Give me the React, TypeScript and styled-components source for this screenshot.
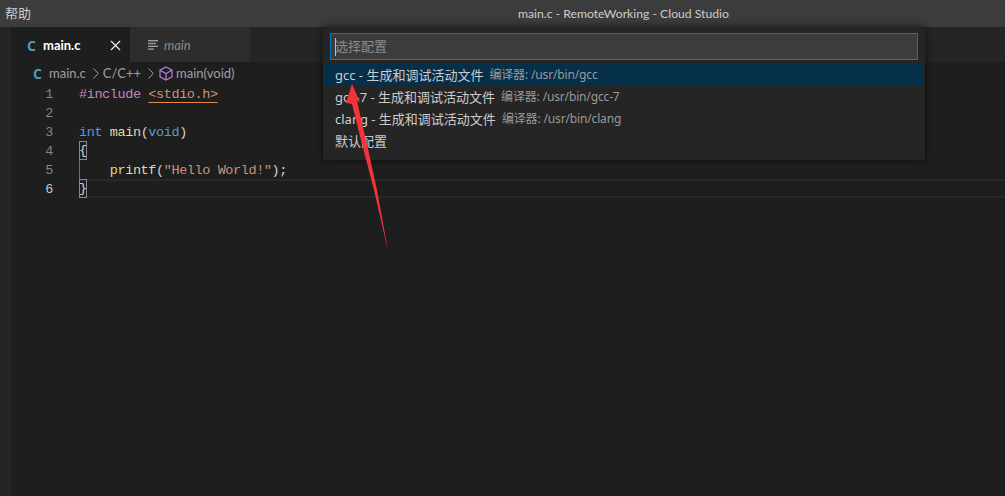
import React from 'react';
import styled, { createGlobalStyle } from 'styled-components';
import { X } from 'lucide-react';

const uiFont = `'Lato', 'Noto Sans CJK SC', sans-serif`;
const cjkFont = `'Noto Sans', 'Noto Sans CJK SC', sans-serif`;

const GlobalStyle = createGlobalStyle`
    html, body {
        margin: 0;
        height: 100%;
        background: #1e1e1e;
        overflow: hidden;
    }
    #root {
        height: 100%;
    }
`;

const Window = styled.div`
    position: relative;
    width: 1005px;
    height: 496px;
    display: flex;
    flex-direction: column;
    font-family: ${cjkFont};
    overflow: hidden;
`;

const TitleBar = styled.div`
    height: 27px;
    flex: none;
    display: flex;
    align-items: center;
    padding-left: 5px;
    background: #3c3c3c;
    color: #cccccc;
    font-size: 13px;
`;

const MenuItem = styled.span`
    width: 26px;
    padding-bottom: 3px;
`;

const WindowTitle = styled.span`
    margin-left: 487px;
    padding-bottom: 1px;
    font-family: ${uiFont};
    font-size: 12.2px;
    white-space: nowrap;
`;

const Body = styled.div`
    flex: 1;
    display: flex;
    min-height: 0;
`;

const Sidebar = styled.div`
    width: 11px;
    flex: none;
    background: #252526;
`;

const Main = styled.div`
    flex: 1;
    display: flex;
    flex-direction: column;
`;

const TabBar = styled.div`
    height: 35px;
    flex: none;
    display: flex;
    background: #252526;
`;

const Tab = styled.div<{ $active?: boolean }>`
    display: flex;
    align-items: center;
    box-sizing: border-box;
    padding-top: 1px;
    background: ${(p) => (p.$active ? '#1e1e1e' : '#2d2d2d')};
    color: ${(p) => (p.$active ? '#ffffff' : '#8a8a8a')};
    width: ${(p) => (p.$active ? '119px' : '120px')};
    padding-left: ${(p) => (p.$active ? '16px' : '18px')};
    font-size: 13px;
    font-style: ${(p) => (p.$active ? 'normal' : 'italic')};
    font-weight: ${(p) => (p.$active ? 700 : 400)};
    font-family: ${uiFont};
`;

const LangIcon = styled.span`
    width: 16px;
    flex: none;
    color: #519aba;
    font-family: 'Open Sans', sans-serif;
    font-weight: 700;
    font-style: normal;
    font-size: 14px;
`;

const TabName = styled.span`
    width: 38px;
`;

const CloseIcon = styled(X)`
    margin-left: 26px;
    color: #f0f0f0;
`;

const TabIconSvg = styled.svg`
    margin-right: 5px;
    flex: none;
`;

const Breadcrumbs = styled.div`
    height: 22px;
    flex: none;
    display: flex;
    align-items: center;
    padding-left: 22px;
    color: #a0a0a0;
    font-family: ${uiFont};
    font-size: 13px;
    white-space: nowrap;
`;

const Chevron = styled.svg`
    margin: 0 4px 0 7px;
    flex: none;
`;

const CubeSvg = styled.svg`
    margin: 0 3px 0 1px;
    flex: none;
`;

const Editor = styled.div`
    flex: 1;
    font-family: 'Liberation Mono', monospace;
    font-size: 13.5px;
    letter-spacing: -0.4px;
`;

const Row = styled.div`
    height: 19px;
    display: flex;
    line-height: 22px;
`;

const LineNumber = styled.div<{ $current?: boolean }>`
    width: 42px;
    margin-right: 26px;
    flex: none;
    text-align: right;
    color: ${(p) => (p.$current ? '#c6c6c6' : '#858585')};
`;

const Code = styled.div<{ $current?: boolean }>`
    position: relative;
    flex: 1;
    box-sizing: border-box;
    white-space: pre;
    color: #d4d4d4;
    ${(p) => (p.$current ? 'border-top: 2px solid #282828; border-bottom: 2px solid #282828;' : '')}
`;

const Tok = styled.span<{ $c: string }>`
    color: ${(p) => p.$c};
`;

const IncludePath = styled.span`
    color: #ce9178;
    text-decoration: underline 1px #e2884f;
    text-decoration-skip-ink: none;
    text-underline-offset: 4px;
`;

const BraceMatch = styled.span<{ $current?: boolean }>`
    position: absolute;
    left: 0;
    top: ${(p) => (p.$current ? '-2px' : '0')};
    width: 7.7px;
    height: 19px;
    line-height: 20px;
    box-sizing: border-box;
    outline: 1px solid #888888;
    outline-offset: -1px;
`;

const IndentGuide = styled.span`
    position: absolute;
    left: 0;
    top: 0;
    bottom: 0;
    border-left: 1px solid #707070;
`;

const QuickPick = styled.div`
    position: absolute;
    left: 323px;
    top: 27px;
    width: 602px;
    height: 133px;
    box-sizing: border-box;
    padding-top: 6px;
    background: #252526;
    box-shadow: 0 0 8px rgba(0, 0, 0, 0.6);
    color: #cccccc;
`;

const PickInput = styled.div`
    height: 27px;
    margin: 0 7px;
    box-sizing: border-box;
    display: flex;
    align-items: center;
    padding: 0 0 2px 4px;
    background: #3c3c3c;
    border: 1px solid #007acc;
    color: #8b8b8b;
    font-size: 13px;
`;

const Caret = styled.span`
    width: 1px;
    height: 18px;
    margin: 2px -1px 0 0;
    background: #c0c0c0;
`;

const PickList = styled.div`
    margin-top: 4px;
`;

const PickRow = styled.div<{ $selected?: boolean }>`
    height: 22px;
    display: flex;
    align-items: center;
    padding: 0 0 2px 12px;
    width: 600px;
    box-sizing: border-box;
    background: ${(p) => (p.$selected ? '#062f4a' : 'transparent')};
    font-size: 13px;
    white-space: nowrap;
`;

const PickDetail = styled.span`
    margin-left: 6px;
    font-size: 12px;
    letter-spacing: -0.15px;
    color: #9a9a9a;
`;

const Arrow = styled.svg`
    position: absolute;
    left: 0;
    top: 0;
    pointer-events: none;
`;

const FileTabIcon: React.FC = () => (
    <TabIconSvg width="11" height="10" viewBox="0 0 11 10" fill="#9a9a9a">
        <rect x="0" y="0" width="10" height="1.4" />
        <rect x="0" y="2.8" width="8" height="1.4" />
        <rect x="0" y="5.6" width="10" height="1.4" />
        <rect x="0" y="8.4" width="6" height="1.4" />
    </TabIconSvg>
);

const ChevronIcon: React.FC = () => (
    <Chevron width="6" height="11" viewBox="0 0 6 11" fill="none" stroke="#a0a0a0" strokeWidth="1">
        <path d="M0.5 0.5 L5.3 5.5 L0.5 10.5" />
    </Chevron>
);

const CubeIcon: React.FC = () => (
    <CubeSvg width="14" height="15" viewBox="0 0 14 15" fill="none" stroke="#b180d7" strokeWidth="1.2">
        <path d="M7 1 L13 4.2 V10.8 L7 14 L1 10.8 V4.2 Z" />
        <path d="M1 4.2 L7 7.5 L13 4.2 M7 7.5 V14" />
    </CubeSvg>
);

const picks = [
    { label: 'gcc - 生成和调试活动文件', detail: '编译器: /usr/bin/gcc', selected: true },
    { label: 'gcc-7 - 生成和调试活动文件', detail: '编译器: /usr/bin/gcc-7' },
    { label: 'clang - 生成和调试活动文件', detail: '编译器: /usr/bin/clang' },
    { label: '默认配置' },
];

const App: React.FC = () => (
    <>
        <GlobalStyle />
        <Window>
            <TitleBar>
                <MenuItem>帮助</MenuItem>
                <WindowTitle>main.c - RemoteWorking - Cloud Studio</WindowTitle>
            </TitleBar>
            <Body>
                <Sidebar />
                <Main>
                    <TabBar>
                        <Tab $active>
                            <LangIcon>C</LangIcon>
                            <TabName>main.c</TabName>
                            <CloseIcon size={17} strokeWidth={1.6} />
                        </Tab>
                        <Tab>
                            <FileTabIcon />
                            main
                        </Tab>
                    </TabBar>
                    <Breadcrumbs>
                        <LangIcon>C</LangIcon>
                        main.c
                        <ChevronIcon />
                        C/C++
                        <ChevronIcon />
                        <CubeIcon />
                        main(void)
                    </Breadcrumbs>
                    <Editor>
                        <Row>
                            <LineNumber>1</LineNumber>
                            <Code>
                                <Tok $c="#c586c0">#include</Tok> <IncludePath>&lt;stdio.h&gt;</IncludePath>
                            </Code>
                        </Row>
                        <Row>
                            <LineNumber>2</LineNumber>
                            <Code />
                        </Row>
                        <Row>
                            <LineNumber>3</LineNumber>
                            <Code>
                                <Tok $c="#569cd6">int</Tok> <Tok $c="#dcdcaa">main</Tok>(<Tok $c="#569cd6">void</Tok>)
                            </Code>
                        </Row>
                        <Row>
                            <LineNumber>4</LineNumber>
                            <Code>
                                <BraceMatch>{'{'}</BraceMatch>
                            </Code>
                        </Row>
                        <Row>
                            <LineNumber>5</LineNumber>
                            <Code>
                                <IndentGuide />
                                {'    '}
                                <Tok $c="#dcdcaa">printf</Tok>(<Tok $c="#ce9178">"Hello World!"</Tok>);
                            </Code>
                        </Row>
                        <Row>
                            <LineNumber $current>6</LineNumber>
                            <Code $current>
                                <BraceMatch $current>{'}'}</BraceMatch>
                            </Code>
                        </Row>
                    </Editor>
                </Main>
            </Body>
            <QuickPick>
                <PickInput>
                    <Caret />
                    选择配置
                </PickInput>
                <PickList>
                    {picks.map((p) => (
                        <PickRow key={p.label} $selected={p.selected}>
                            {p.label}
                            {p.detail && <PickDetail>{p.detail}</PickDetail>}
                        </PickRow>
                    ))}
                </PickList>
            </QuickPick>
            <Arrow width="1005" height="496" viewBox="0 0 1005 496">
                <path
                    d="M352 84 L360 102 L357 101 L366 140 L377 190 L388 251 L374 190 L361 140 L352 104 L346 103 Z"
                    fill="#f2333a"
                />
            </Arrow>
        </Window>
    </>
);

export default App;
